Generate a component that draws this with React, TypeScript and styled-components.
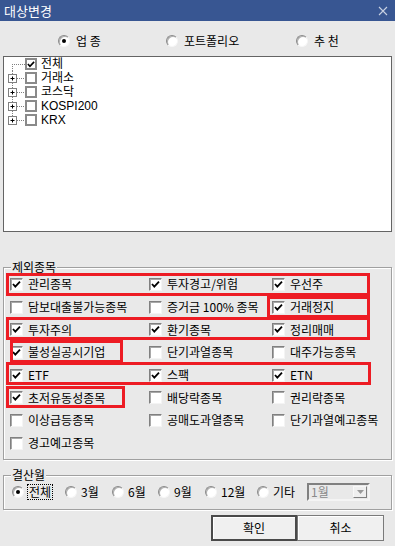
import React from 'react';
import styled, { createGlobalStyle } from 'styled-components';

const FONT = `"Noto Sans CJK KR", "Liberation Sans", sans-serif`;
const TREE_FONT = `"Liberation Sans", "Noto Sans CJK KR", sans-serif`;
const BG = '#e9e9e9';

const Global = createGlobalStyle`
  html, body { margin: 0; padding: 0; background: ${BG}; }
  body { font-family: ${FONT}; font-size: 12px; color: #000; }
  * { box-sizing: border-box; }
`;

const Window = styled.div`
  width: 395px;
  height: 546px;
  background: ${BG};
  display: flex;
  flex-direction: column;
  overflow: hidden;
`;

const TitleBar = styled.div`
  height: 21px;
  flex: none;
  background: #385692;
  color: #fff;
  display: flex;
  align-items: center;
  justify-content: space-between;
  padding: 0 7px 0 4px;
  font-size: 13px;
  line-height: 15px;
`;

const RadioRow = styled.div`
  height: 35px;
  flex: none;
  padding: 4px 0 0 58px;
  display: flex;
  align-items: center;
`;

const RadioItem = styled.label<{ $w?: number; $gap?: number }>`
  display: flex;
  align-items: center;
  gap: ${p => p.$gap ?? 6}px;
  width: ${p => (p.$w ? `${p.$w}px` : 'auto')};
  flex: none;
  line-height: 14px;
  white-space: nowrap;
`;

const RadioCircle = styled.span<{ $on?: boolean }>`
  position: relative;
  width: 12px;
  height: 12px;
  flex: none;
  border-radius: 50%;
  background: #fff;
  border: 1px solid;
  border-color: #8a8a8a #f6f6f6 #f6f6f6 #8a8a8a;
  box-shadow: inset 1px 1px 0 #b0b0b0;
  &::after {
    content: '';
    display: ${p => (p.$on ? 'block' : 'none')};
    position: absolute;
    left: 3px;
    top: 3px;
    width: 4px;
    height: 4px;
    border-radius: 50%;
    background: #000;
  }
`;

const TreeBox = styled.div`
  margin: 0 3px;
  height: 176px;
  flex: none;
  border: 1px solid #646464;
  background: #fff;
  display: flex;
  flex-direction: column;
`;

const TreeRow = styled.div`
  display: flex;
  align-items: center;
  height: 14px;
`;

const TreeCheck = styled.span`
  width: 12px;
  height: 12px;
  flex: none;
  border: 2px solid #8a8a8a;
  background: #fff;
  display: flex;
  align-items: center;
  justify-content: center;
`;

const TreeLabel = styled.span`
  margin-left: 4px;
  font-family: ${TREE_FONT};
  font-size: 12px;
  line-height: 14px;
  white-space: nowrap;
`;

const GroupBox = styled.div<{ $top: number }>`
  position: relative;
  margin: ${p => p.$top}px 3px 0;
  flex: none;
  border: 1px solid #a0a0a0;
  box-shadow: 1px 1px 0 #fff, inset 1px 1px 0 #fff;
`;

const GroupLabel = styled.span`
  position: absolute;
  top: -8px;
  left: 7px;
  padding: 0 1px;
  background: ${BG};
  line-height: 14px;
  white-space: nowrap;
`;

const ExcludeGrid = styled.div`
  display: grid;
  grid-template-columns: 139px 123px 1fr;
  grid-auto-rows: 22.7px;
  padding: 5px 0 4px 6px;
`;

const CheckItem = styled.label`
  display: flex;
  align-items: center;
  gap: 5px;
  white-space: nowrap;
  line-height: 14px;
`;

const CheckBox = styled.span`
  width: 13px;
  height: 13px;
  flex: none;
  background: #fff;
  border: 1px solid;
  border-color: #808080 #f4f4f4 #f4f4f4 #808080;
  box-shadow: inset 1px 1px 0 #a8a8a8;
  display: flex;
  align-items: center;
  justify-content: center;
`;

const RedBox = styled.div<{ $x: number; $y: number; $w: number; $h: number }>`
  position: absolute;
  left: ${p => p.$x}px;
  top: ${p => p.$y}px;
  width: ${p => p.$w}px;
  height: ${p => p.$h}px;
  border: 3px solid #ed1c24;
  pointer-events: none;
`;

const MonthRow = styled.div`
  height: 33px;
  padding-left: 8px;
  display: flex;
  align-items: center;
`;

const FocusText = styled.span`
  outline: 1px dotted #000;
  outline-offset: 0;
  padding: 0 1px;
  line-height: 14px;
`;

const Select = styled.div`
  width: 63px;
  height: 18px;
  flex: none;
  border: 2px solid;
  border-color: #808080 #f4f4f4 #f4f4f4 #808080;
  background: ${BG};
  color: #8a8a8a;
  display: flex;
  align-items: center;
  padding: 0 1px 0 2px;
  line-height: 14px;
`;

const SelectArrow = styled.span`
  margin-left: auto;
  width: 14px;
  height: 12px;
  border: 1px solid;
  border-color: #f8f8f8 #808080 #808080 #f8f8f8;
  background: #efefef;
  display: flex;
  align-items: center;
  justify-content: center;
`;

const ButtonRow = styled.div`
  margin-top: 5px;
  display: flex;
  justify-content: flex-end;
  padding-right: 11px;
`;

const Button = styled.button<{ $w: number; $primary?: boolean }>`
  width: ${p => p.$w}px;
  height: 26px;
  font-family: ${FONT};
  font-size: 12px;
  color: #000;
  background: #f0f0f0;
  border: ${p => (p.$primary ? '2px solid #4a4a4a' : '1px solid #7a7a7a')};
  box-shadow: inset 1px 1px 0 #fff;
  padding: 0;
  line-height: 14px;
`;

const Check = () => (
  <svg width="9" height="9" viewBox="0 0 9 9">
    <polyline points="1,4 3.3,6.6 8,1.6" fill="none" stroke="#000" strokeWidth="1.8" />
  </svg>
);

const CloseIcon = () => (
  <svg width="10" height="10" viewBox="0 0 10 10">
    <path d="M1 1 L9 9 M9 1 L1 9" stroke="#c9d1e2" strokeWidth="1.1" />
  </svg>
);

type Pos = 'first' | 'mid' | 'last';
const Connector = ({ pos }: { pos: Pos }) => (
  <svg width="21" height="14" viewBox="0 0 21 14" style={{ flex: 'none' }}>
    <line
      x1="8.5"
      y1={pos === 'first' ? 7 : 0}
      x2="8.5"
      y2={pos === 'last' ? 7.5 : 14}
      stroke="#808080"
      strokeDasharray="1 1"
    />
    <line x1={pos === 'first' ? 8 : 13} y1="7.5" x2="21" y2="7.5" stroke="#808080" strokeDasharray="1 1" />
    {pos !== 'first' && (
      <g>
        <rect x="4.5" y="3.5" width="8" height="8" fill="#fff" stroke="#808080" />
        <line x1="6.5" y1="7.5" x2="10.5" y2="7.5" stroke="#000" />
        <line x1="8.5" y1="5.5" x2="8.5" y2="9.5" stroke="#000" />
      </g>
    )}
  </svg>
);

const Arrow = () => (
  <svg width="7" height="4" viewBox="0 0 7 4">
    <path d="M0 0 H7 L3.5 4 Z" fill="#9a9a9a" />
  </svg>
);

const treeItems: { label: string; checked: boolean }[] = [
  { label: '전체', checked: true },
  { label: '거래소', checked: false },
  { label: '코스닥', checked: false },
  { label: 'KOSPI200', checked: false },
  { label: 'KRX', checked: false },
];

const exclude: [string, boolean][] = [
  ['관리종목', true], ['투자경고/위험', true], ['우선주', true],
  ['담보대출불가능종목', false], ['증거금 100% 종목', false], ['거래정지', true],
  ['투자주의', true], ['환기종목', true], ['정리매매', true],
  ['불성실공시기업', true], ['단기과열종목', false], ['대주가능종목', false],
  ['ETF', true], ['스팩', true], ['ETN', true],
  ['초저유동성종목', true], ['배당락종목', false], ['권리락종목', false],
  ['이상급등종목', false], ['공매도과열종목', false], ['단기과열예고종목', false],
  ['경고예고종목', false],
];

const redBoxes = [
  { x: 2, y: 5, w: 364, h: 23 },
  { x: 263, y: 28, w: 103, h: 22 },
  { x: 2, y: 49, w: 364, h: 23 },
  { x: 6, y: 72, w: 113, h: 23 },
  { x: 2, y: 94, w: 365, h: 23 },
  { x: 2, y: 118, w: 119, h: 22 },
];

const months = [
  { label: '전체', w: 53, on: true },
  { label: '3월', w: 47 },
  { label: '6월', w: 46 },
  { label: '9월', w: 47 },
  { label: '12월', w: 52 },
  { label: '기타', w: 50 },
];

export default function App() {
  return (
    <>
      <Global />
      <Window>
        <TitleBar>
          <span>대상변경</span>
          <CloseIcon />
        </TitleBar>

        <RadioRow>
          <RadioItem $w={108}>
            <RadioCircle $on />
            <span>업 종</span>
          </RadioItem>
          <RadioItem $w={130}>
            <RadioCircle />
            <span>포트폴리오</span>
          </RadioItem>
          <RadioItem>
            <RadioCircle />
            <span>추 천</span>
          </RadioItem>
        </RadioRow>

        <TreeBox>
          {treeItems.map((t, i) => (
            <TreeRow key={t.label}>
              <Connector pos={i === 0 ? 'first' : i === treeItems.length - 1 ? 'last' : 'mid'} />
              <TreeCheck>{t.checked && <Check />}</TreeCheck>
              <TreeLabel>{t.label}</TreeLabel>
            </TreeRow>
          ))}
        </TreeBox>

        <GroupBox $top={35}>
          <GroupLabel>제외종목</GroupLabel>
          <ExcludeGrid>
            {exclude.map(([label, on]) => (
              <CheckItem key={label}>
                <CheckBox>{on && <Check />}</CheckBox>
                <span>{label}</span>
              </CheckItem>
            ))}
          </ExcludeGrid>
          {redBoxes.map((b, i) => (
            <RedBox key={i} $x={b.x} $y={b.y} $w={b.w} $h={b.h} />
          ))}
        </GroupBox>

        <GroupBox $top={15}>
          <GroupLabel>결산월</GroupLabel>
          <MonthRow>
            {months.map(m => (
              <RadioItem key={m.label} $w={m.w} $gap={4}>
                <RadioCircle $on={m.on} />
                {m.on ? <FocusText>{m.label}</FocusText> : <span>{m.label}</span>}
              </RadioItem>
            ))}
            <Select>
              <span>1월</span>
              <SelectArrow>
                <Arrow />
              </SelectArrow>
            </Select>
          </MonthRow>
        </GroupBox>

        <ButtonRow>
          <Button $w={86} $primary>확인</Button>
          <Button $w={87}>취소</Button>
        </ButtonRow>
      </Window>
    </>
  );
}
